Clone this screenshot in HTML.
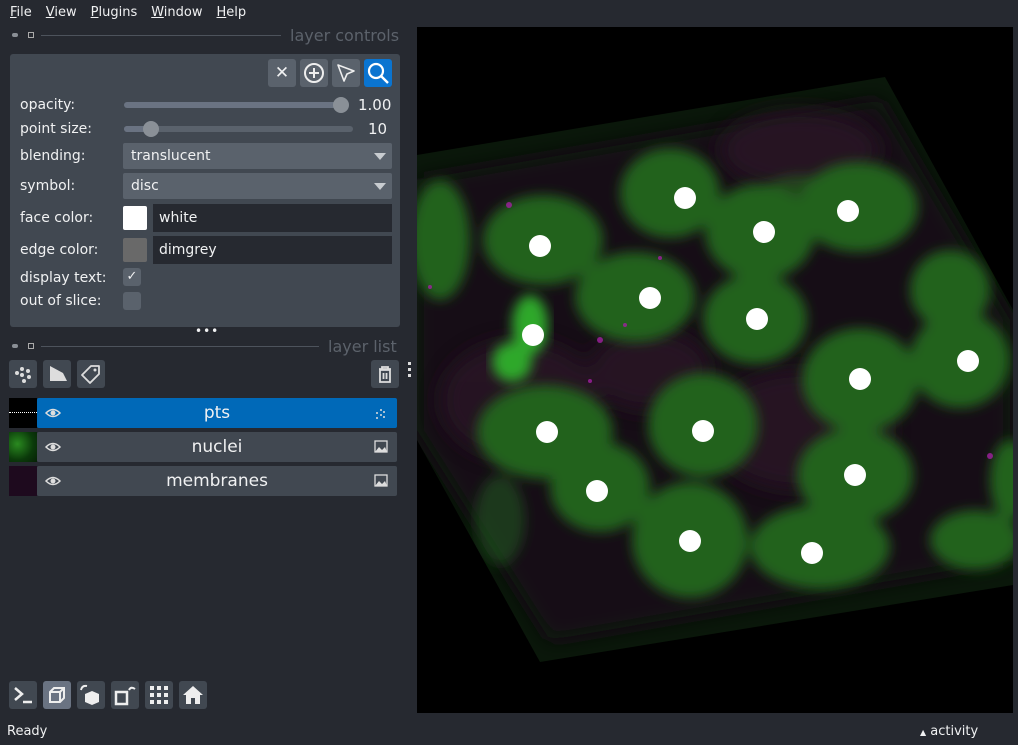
<!DOCTYPE html>
<html><head><meta charset="utf-8"><style>
*{box-sizing:border-box;margin:0;padding:0}
body{width:1018px;height:745px;background:#262930;font-family:"DejaVu Sans","Liberation Sans",sans-serif;color:#f0f1f2;position:relative;overflow:hidden;font-size:14px}
.a{position:absolute}
.menu span{margin-right:14px;font-size:13px}
.lbl{font-size:14px;color:#f0f1f2}
.btn{background:#5a626c;border-radius:3px}
.dd{background:#5a626c;border-radius:2px;font-size:14px;padding-left:8px;line-height:26px}
.tri{position:absolute;right:6px;top:10px;width:0;height:0;border-left:6px solid transparent;border-right:6px solid transparent;border-top:7px solid #c8ccd0}
.row{background:#414851;border-radius:2px;height:30px;font-size:17px;text-align:center;line-height:30px}
.bb{background:#414851;border-radius:3px;width:28px;height:28px}
</style></head><body>
<div class="a menu" style="left:10px;top:4px"><span><u>F</u>ile</span><span><u>V</u>iew</span><span><u>P</u>lugins</span><span><u>W</u>indow</span><span><u>H</u>elp</span></div>
<div class="a" style="left:12px;top:33px;width:6px;height:4px;background:#8a8f96;border-radius:2px"></div>
<div class="a" style="left:28px;top:32px;width:6px;height:6px;border:1px solid #aaa"></div>
<div class="a" style="left:41px;top:35px;width:240px;height:1px;background:#4d535c"></div>
<div class="a" style="left:290px;top:26px;font-size:16px;color:#5c626b">layer controls</div>
<div class="a" style="left:10px;top:54px;width:390px;height:273px;background:#414851;border-radius:3px"></div>
<div class="a btn" style="left:268px;top:59px;width:28px;height:28px;text-align:center;line-height:28px;font-size:17px">✕</div>
<div class="a btn" style="left:300px;top:59px;width:28px;height:28px"><svg width="28" height="28"><circle cx="14" cy="14" r="9" fill="none" stroke="#eee" stroke-width="2"/><path d="M14 9v10M9 14h10" stroke="#eee" stroke-width="2"/></svg></div>
<div class="a btn" style="left:332px;top:59px;width:28px;height:28px"><svg width="28" height="28"><path d="M6 6L22 12L15 15L12 22Z" fill="none" stroke="#eee" stroke-width="1.6" stroke-linejoin="round"/></svg></div>
<div class="a" style="left:364px;top:59px;width:28px;height:28px;background:#0a74d0;border-radius:3px"><svg width="28" height="28"><circle cx="12" cy="12" r="7" fill="none" stroke="#fff" stroke-width="2.2"/><path d="M17 17L24 24" stroke="#fff" stroke-width="2.4"/></svg></div>
<div class="a lbl" style="left:20px;top:97px">opacity:</div>
<div class="a" style="left:124px;top:102px;width:220px;height:6px;background:#6a7382;border-radius:3px"></div>
<div class="a" style="left:333px;top:97px;width:16px;height:16px;background:#8a9097;border-radius:50%"></div>
<div class="a lbl" style="left:358px;top:96px;font-size:15px">1.00</div>
<div class="a lbl" style="left:20px;top:121px">point size:</div>
<div class="a" style="left:124px;top:126px;width:229px;height:6px;background:#5a626c;border-radius:3px"></div>
<div class="a" style="left:124px;top:126px;width:25px;height:6px;background:#6a7382;border-radius:3px"></div>
<div class="a" style="left:143px;top:121px;width:16px;height:16px;background:#8a9097;border-radius:50%"></div>
<div class="a lbl" style="left:368px;top:120px;font-size:15px">10</div>
<div class="a lbl" style="left:20px;top:148px">blending:</div>
<div class="a dd" style="left:123px;top:143px;width:269px;height:26px">translucent<div class="tri"></div></div>
<div class="a lbl" style="left:20px;top:178px">symbol:</div>
<div class="a dd" style="left:123px;top:173px;width:269px;height:26px">disc<div class="tri"></div></div>
<div class="a lbl" style="left:20px;top:210px">face color:</div>
<div class="a" style="left:123px;top:206px;width:24px;height:24px;background:#fff;border-radius:2px"></div>
<div class="a" style="left:153px;top:204px;width:239px;height:28px;background:#262930;line-height:28px;padding-left:6px">white</div>
<div class="a lbl" style="left:20px;top:242px">edge color:</div>
<div class="a" style="left:123px;top:238px;width:24px;height:24px;background:#696969;border-radius:2px"></div>
<div class="a" style="left:153px;top:236px;width:239px;height:28px;background:#262930;line-height:28px;padding-left:6px">dimgrey</div>
<div class="a lbl" style="left:20px;top:270px">display text:</div>
<div class="a" style="left:123px;top:268px;width:18px;height:18px;background:#5a626c;border-radius:3px;text-align:center;line-height:18px;font-size:13px">✓</div>
<div class="a lbl" style="left:20px;top:293px">out of slice:</div>
<div class="a" style="left:123px;top:292px;width:18px;height:18px;background:#5a626c;border-radius:3px"></div>
<div class="a" style="left:195px;top:324px;font-size:12px;letter-spacing:1px">•••</div>
<div class="a" style="left:12px;top:344px;width:6px;height:4px;background:#8a8f96;border-radius:2px"></div>
<div class="a" style="left:28px;top:343px;width:6px;height:6px;border:1px solid #aaa"></div>
<div class="a" style="left:41px;top:346px;width:278px;height:1px;background:#4d535c"></div>
<div class="a" style="left:328px;top:337px;font-size:16px;color:#5c626b">layer list</div>
<div class="a bb" style="left:9px;top:360px"><svg width="28" height="28"><g fill="#ddd"><circle cx="8" cy="13" r="2"/><circle cx="13" cy="9" r="2"/><circle cx="19" cy="11" r="2"/><circle cx="13" cy="15" r="2"/><circle cx="20" cy="17" r="2"/><circle cx="15" cy="21" r="2"/></g></svg></div>
<div class="a bb" style="left:43px;top:360px"><svg width="28" height="28"><path d="M7 6L20 13L24 21L7 21Z" fill="#ddd"/></svg></div>
<div class="a bb" style="left:77px;top:360px"><svg width="28" height="28"><path d="M5 15L14 6L22 6L22 14L13 23Z" fill="none" stroke="#ddd" stroke-width="1.8" stroke-linejoin="round"/><circle cx="18" cy="10" r="1.5" fill="#ddd"/></svg></div>
<div class="a bb" style="left:371px;top:360px"><svg width="28" height="28"><path d="M8 9h12M11 9V7h6v2M9 10h10v12H9Z" fill="none" stroke="#ddd" stroke-width="1.8"/><path d="M12.5 13v6M15.5 13v6" stroke="#ddd" stroke-width="1.8"/></svg></div>
<div class="a" style="left:408px;top:362px;width:3px;height:3px;background:#ddd;box-shadow:0 6px #ddd,0 12px #ddd"></div>
<div class="a" style="left:9px;top:398px;width:28px;height:30px;background:#000"><div style="margin-top:14px;border-top:1px dotted #fff"></div></div>
<div class="a row" style="left:37px;top:398px;width:360px;background:#0069b8">pts</div>
<div class="a" style="left:9px;top:432px;width:28px;height:30px;background:radial-gradient(circle at 30% 40%,#2a8a20 0,#0b3a0a 60%,#062006 100%)"></div>
<div class="a row" style="left:37px;top:432px;width:360px">nuclei</div>
<div class="a" style="left:9px;top:466px;width:28px;height:30px;background:#1e0a1e"></div>
<div class="a row" style="left:37px;top:466px;width:360px">membranes</div>
<svg class="a" style="left:44px;top:406px" width="18" height="90"><g fill="none" stroke="#ddd" stroke-width="1.5"><path d="M2 7Q9 0 16 7Q9 14 2 7Z"/><path d="M2 41Q9 34 16 41Q9 48 2 41Z"/><path d="M2 75Q9 68 16 75Q9 82 2 75Z"/></g><g fill="#ddd"><circle cx="9" cy="7" r="2.5"/><circle cx="9" cy="41" r="2.5"/><circle cx="9" cy="75" r="2.5"/></g></svg>
<svg class="a" style="left:374px;top:406px" width="14" height="90"><g fill="#ddd"><circle cx="3" cy="7" r="1"/><circle cx="7" cy="4" r="1"/><circle cx="10" cy="6" r="1"/><circle cx="7" cy="9" r="1"/><circle cx="10" cy="11" r="1"/><circle cx="3" cy="12" r="1"/></g><g fill="none" stroke="#ddd" stroke-width="1.3"><rect x="1" y="35" width="12" height="11"/><rect x="1" y="69" width="12" height="11"/></g><path d="M1 46L5 41L8 44L11 41L13 46Z M1 80L5 75L8 78L11 75L13 80Z" fill="#ddd"/></svg>
<div class="a bb" style="left:9px;top:681px"><svg width="28" height="28"><path d="M6 7L13 13L6 19" fill="none" stroke="#eee" stroke-width="2.5"/><path d="M14 21h9" stroke="#eee" stroke-width="2.5"/></svg></div>
<div class="a bb" style="left:43px;top:681px;background:#6a7382"><svg width="28" height="28"><path d="M7 11L11 7H21V17L17 21H7Z M7 11H17V21 M17 11L21 7" fill="none" stroke="#eee" stroke-width="2"/></svg></div>
<div class="a bb" style="left:77px;top:681px"><svg width="28" height="28"><path d="M8 13L15 10L22 13L22 21L15 24L8 21Z" fill="#eee"/><path d="M4 9Q5 4 10 5" fill="none" stroke="#eee" stroke-width="2"/></svg></div>
<div class="a bb" style="left:111px;top:681px"><svg width="28" height="28"><rect x="5" y="11" width="11" height="12" fill="none" stroke="#eee" stroke-width="2.5"/><path d="M18 9Q20 5 24 8" fill="none" stroke="#eee" stroke-width="2"/></svg></div>
<div class="a bb" style="left:145px;top:681px"><svg width="28" height="28"><g fill="#eee"><rect x="5" y="5" width="4" height="4"/><rect x="12" y="5" width="4" height="4"/><rect x="19" y="5" width="4" height="4"/><rect x="5" y="12" width="4" height="4"/><rect x="12" y="12" width="4" height="4"/><rect x="19" y="12" width="4" height="4"/><rect x="5" y="19" width="4" height="4"/><rect x="12" y="19" width="4" height="4"/><rect x="19" y="19" width="4" height="4"/></g></svg></div>
<div class="a bb" style="left:179px;top:681px"><svg width="28" height="28"><path d="M14 5L24 14H21V23H16V17H12V23H7V14H4Z" fill="#eee"/></svg></div>
<div class="a" style="left:7px;top:724px;font-size:13px">Ready</div>
<div class="a" style="left:920px;top:724px;font-size:13px"><span style="font-size:8px">▲</span> activity</div>
<svg class="a" style="left:417px;top:27px" width="596" height="686" viewBox="417 27 596 686">
<defs><filter id="b"><feGaussianBlur stdDeviation="6"/></filter><filter id="b2"><feGaussianBlur stdDeviation="10"/></filter><clipPath id="cp"><path d="M417 155L885 77L1013 310L1013 585L540 662L417 440Z"/></clipPath></defs>
<rect x="417" y="27" width="596" height="686" fill="#000"/>
<path d="M417 155L885 77L1013 310L1013 585L540 662L417 440Z" fill="#0a170a"/>
<g clip-path="url(#cp)">
<path d="M417 180L880 100L1010 320L1010 560L550 640L417 430Z" fill="#170c17" filter="url(#b2)"/>
<g fill="#2a1228" filter="url(#b2)" opacity=".8"><ellipse cx="520" cy="400" rx="80" ry="60"/><ellipse cx="800" cy="430" rx="90" ry="60"/><ellipse cx="650" cy="370" rx="60" ry="40"/><ellipse cx="800" cy="150" rx="80" ry="40"/></g>
<g fill="#23621f" filter="url(#b)">
<ellipse cx="670" cy="193" rx="50" ry="45"/><ellipse cx="800" cy="205" rx="45" ry="30" opacity=".6"/><ellipse cx="858" cy="207" rx="60" ry="45"/>
<ellipse cx="543" cy="240" rx="60" ry="45"/><ellipse cx="760" cy="232" rx="55" ry="48"/><ellipse cx="440" cy="240" rx="30" ry="60"/>
<ellipse cx="635" cy="297" rx="60" ry="45"/><ellipse cx="755" cy="319" rx="52" ry="45"/><ellipse cx="950" cy="290" rx="40" ry="40"/>
<ellipse cx="960" cy="360" rx="50" ry="48"/><ellipse cx="860" cy="380" rx="58" ry="52"/><ellipse cx="703" cy="425" rx="55" ry="52"/>
<ellipse cx="545" cy="432" rx="68" ry="47"/><ellipse cx="855" cy="475" rx="58" ry="47"/><ellipse cx="600" cy="487" rx="50" ry="45"/>
<ellipse cx="690" cy="540" rx="58" ry="58"/><ellipse cx="820" cy="547" rx="70" ry="42"/><ellipse cx="975" cy="540" rx="45" ry="30"/><ellipse cx="1010" cy="480" rx="20" ry="40"/>
<ellipse cx="500" cy="520" rx="25" ry="45" opacity=".5"/>
</g>
<g fill="#2fa82a" filter="url(#b)"><ellipse cx="530" cy="325" rx="18" ry="30"/><ellipse cx="512" cy="362" rx="20" ry="20"/></g>
<g fill="#a020a0" opacity=".8"><circle cx="509" cy="205" r="3"/><circle cx="600" cy="340" r="3"/><circle cx="625" cy="325" r="2"/><circle cx="990" cy="456" r="3"/><circle cx="430" cy="287" r="2"/><circle cx="660" cy="258" r="2"/><circle cx="590" cy="381" r="2"/></g>
</g>
<g fill="#fff"><circle cx="685" cy="198" r="11"/><circle cx="848" cy="211" r="11"/><circle cx="540" cy="246" r="11"/><circle cx="764" cy="232" r="11"/><circle cx="650" cy="298" r="11"/><circle cx="757" cy="319" r="11"/><circle cx="533" cy="335" r="11"/><circle cx="968" cy="361" r="11"/><circle cx="860" cy="379" r="11"/><circle cx="703" cy="431" r="11"/><circle cx="547" cy="432" r="11"/><circle cx="855" cy="475" r="11"/><circle cx="597" cy="491" r="11"/><circle cx="690" cy="541" r="11"/><circle cx="812" cy="553" r="11"/></g>
</svg>
</body></html>
